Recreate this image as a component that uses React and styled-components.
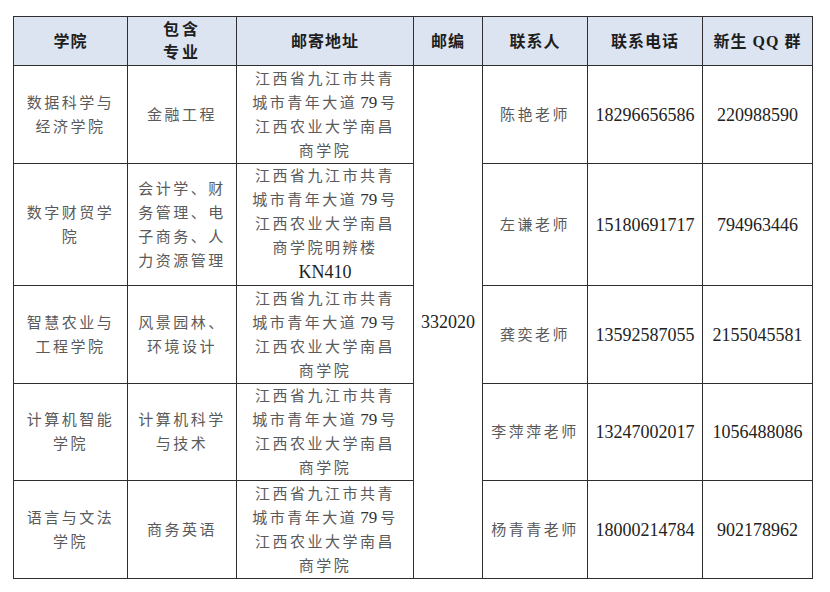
import React from "react";
import styled, { createGlobalStyle } from "styled-components";

const GlobalStyle = createGlobalStyle`
  html, body {
    margin: 0;
    padding: 0;
    background: #ffffff;
  }
  body {
    font-family: "Liberation Serif", "Noto Sans CJK SC", serif;
  }
`;

const Page = styled.div`
  width: 830px;
  height: 592px;
  padding: 16px 0 0 13px;
  box-sizing: border-box;
  background: #ffffff;
`;

const Table = styled.table`
  border-collapse: collapse;
  table-layout: fixed;
  width: 800px;
  border: 1px solid #333;
`;

const Head = styled.th`
  background: #dce4f2;
  border: 1px solid #2e2e2e;
  color: #1e1e1e;
  font-family: "Liberation Serif", "Noto Sans CJK SC", serif;
  font-weight: 700;
  font-size: 16px;
  line-height: ${(p) => (p.$tall ? "23px" : "21px")};
  letter-spacing: ${(p) => (p.$tall ? "3px" : "1px")};
  padding: 0;
  text-align: center;
  vertical-align: middle;
`;

const Row = styled.tr`
  height: ${(p) => p.$h}px;
`;

const Cell = styled.td`
  border: 1px solid #2e2e2e;
  padding: 0;
  text-align: center;
  vertical-align: middle;
  font-family: "Liberation Serif", "Noto Sans CJK SC", serif;
  font-size: 15px;
  line-height: 24px;
  letter-spacing: ${(p) => (p.$num ? "0" : "2.5px")};
  color: ${(p) => (p.$num ? "#222" : "#5a5a5a")};
  ${(p) => p.$num && "font-size: 18px;"}
`;

const Line = styled.div`
  white-space: nowrap;
`;

const Num = styled.span`
  font-family: "Liberation Serif", serif;
  font-size: 17px;
  letter-spacing: 0;
  color: #333;
  padding: 0 3px;
`;

const Code = styled.span`
  font-family: "Liberation Serif", serif;
  font-size: 18px;
  letter-spacing: 0;
  color: #1e1e1e;
`;

const Lines = ({ items }) =>
  items.map((t, i) => <Line key={i}>{t}</Line>);

const addressBase = [
  "江西省九江市共青",
  <>城市青年大道<Num>79</Num>号</>,
  "江西农业大学南昌",
];

const rows = [
  {
    h: 98,
    college: ["数据科学与", "经济学院"],
    major: ["金融工程"],
    address: [...addressBase, "商学院"],
    contact: "陈艳老师",
    phone: "18296656586",
    qq: "220988590",
  },
  {
    h: 121,
    college: ["数字财贸学", "院"],
    major: ["会计学、财", "务管理、电", "子商务、人", "力资源管理"],
    address: [...addressBase, "商学院明辨楼", <Code>KN410</Code>],
    contact: "左谦老师",
    phone: "15180691717",
    qq: "794963446",
  },
  {
    h: 98,
    college: ["智慧农业与", "工程学院"],
    major: ["风景园林、", "环境设计"],
    address: [...addressBase, "商学院"],
    contact: "龚奕老师",
    phone: "13592587055",
    qq: "2155045581",
  },
  {
    h: 97,
    college: ["计算机智能", "学院"],
    major: ["计算机科学", "与技术"],
    address: [...addressBase, "商学院"],
    contact: "李萍萍老师",
    phone: "13247002017",
    qq: "1056488086",
  },
  {
    h: 98,
    college: ["语言与文法", "学院"],
    major: ["商务英语"],
    address: [...addressBase, "商学院"],
    contact: "杨青青老师",
    phone: "18000214784",
    qq: "902178962",
  },
];

const widths = [114, 109, 177, 69, 105, 115, 110];

export default function App() {
  return (
    <Page>
      <GlobalStyle />
      <Table>
        <colgroup>
          {widths.map((w, i) => (
            <col key={i} style={{ width: w }} />
          ))}
        </colgroup>
        <thead>
          <Row $h={49}>
            <Head>学院</Head>
            <Head $tall>
              包含
              <br />
              专业
            </Head>
            <Head>邮寄地址</Head>
            <Head>邮编</Head>
            <Head>联系人</Head>
            <Head>联系电话</Head>
            <Head>新生 QQ 群</Head>
          </Row>
        </thead>
        <tbody>
          {rows.map((r, i) => (
            <Row $h={r.h} key={i}>
              <Cell>
                <Lines items={r.college} />
              </Cell>
              <Cell>
                <Lines items={r.major} />
              </Cell>
              <Cell>
                <Lines items={r.address} />
              </Cell>
              {i === 0 && (
                <Cell $num rowSpan={5}>
                  332020
                </Cell>
              )}
              <Cell>{r.contact}</Cell>
              <Cell $num>{r.phone}</Cell>
              <Cell $num>{r.qq}</Cell>
            </Row>
          ))}
        </tbody>
      </Table>
    </Page>
  );
}
